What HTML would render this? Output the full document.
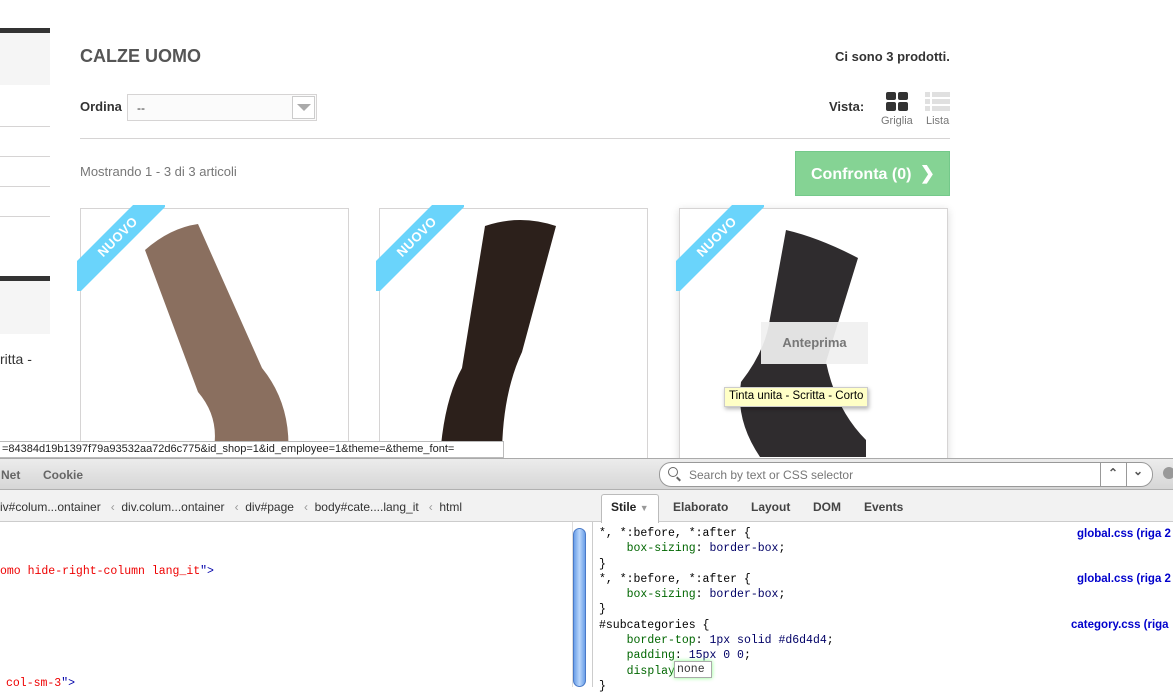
<!DOCTYPE html>
<html><head><meta charset="utf-8"><style>
*{box-sizing:border-box;margin:0;padding:0}
body{width:1173px;height:687px;overflow:hidden;background:#fff;font-family:"Liberation Sans",Arial,sans-serif;position:relative;color:#333}
.a{position:absolute}
.card{position:absolute;top:208px;width:269px;height:260px;border:1px solid #d6d4d4;background:#fff;overflow:visible}
.rib{position:absolute;left:-4px;top:-4px;width:88px;height:86px;overflow:hidden}
.rib div{position:absolute;left:-34px;top:20px;width:150px;height:24px;background:#6ad4fb;transform:rotate(-45deg);color:#fff;font-size:13px;font-weight:bold;text-align:center;line-height:24px;letter-spacing:0.5px}
.mono{font-family:"Liberation Mono",monospace;font-size:11.5px}
.tab{position:absolute;top:500px;font-size:12px;font-weight:bold;color:#444}
</style></head><body>
<div class="a" style="left:0;top:28px;width:50px;height:5px;background:#333"></div>
<div class="a" style="left:0;top:33px;width:50px;height:52px;background:#f5f5f5"></div>
<div class="a" style="left:0;top:126px;width:50px;height:1px;background:#d6d4d4"></div>
<div class="a" style="left:0;top:156px;width:50px;height:1px;background:#d6d4d4"></div>
<div class="a" style="left:0;top:186px;width:50px;height:1px;background:#d6d4d4"></div>
<div class="a" style="left:0;top:216px;width:50px;height:1px;background:#d6d4d4"></div>
<div class="a" style="left:0;top:276px;width:50px;height:5px;background:#333"></div>
<div class="a" style="left:0;top:281px;width:50px;height:53px;background:#f5f5f5"></div>
<div class="a" style="left:0;top:351px;font-size:14px;color:#333">ritta -</div>
<div class="a" style="left:80px;top:46px;font-size:18px;font-weight:bold;color:#555">CALZE UOMO</div>
<div class="a" style="left:835px;top:49px;font-size:13px;font-weight:bold;color:#333">Ci sono 3 prodotti.</div>
<div class="a" style="left:80px;top:99px;font-size:13px;font-weight:bold;color:#333">Ordina</div>
<div class="a" style="left:127px;top:94px;width:190px;height:27px;border:1px solid #d6d4d4;background:#fbfbfb;font-size:12px;padding:6px 9px">--</div>
<div class="a" style="left:292px;top:96px;width:23px;height:23px;border:1px solid #ccc;background:#fff"></div>
<div class="a" style="left:297px;top:104px;width:0;height:0;border-left:7px solid transparent;border-right:7px solid transparent;border-top:7px solid #aaa"></div>
<div class="a" style="left:829px;top:99px;font-size:13px;font-weight:bold;color:#333">Vista:</div>
<div class="a" style="left:886px;top:92px;width:10px;height:8px;background:#333;border-radius:2px"></div>
<div class="a" style="left:898px;top:92px;width:10px;height:8px;background:#333;border-radius:2px"></div>
<div class="a" style="left:886px;top:102px;width:10px;height:9px;background:#333;border-radius:2px"></div>
<div class="a" style="left:898px;top:102px;width:10px;height:9px;background:#333;border-radius:2px"></div>
<div class="a" style="left:881px;top:115px;font-size:11px;color:#777">Griglia</div>
<div class="a" style="left:925px;top:92px;width:5px;height:5px;background:#e0e0e0"></div><div class="a" style="left:932px;top:92px;width:18px;height:5px;background:#e0e0e0"></div>
<div class="a" style="left:925px;top:99px;width:5px;height:5px;background:#e0e0e0"></div><div class="a" style="left:932px;top:99px;width:18px;height:5px;background:#e0e0e0"></div>
<div class="a" style="left:925px;top:106px;width:5px;height:5px;background:#e0e0e0"></div><div class="a" style="left:932px;top:106px;width:18px;height:5px;background:#e0e0e0"></div>
<div class="a" style="left:926px;top:115px;font-size:11px;color:#777">Lista</div>
<div class="a" style="left:80px;top:138px;width:870px;height:1px;background:#d6d4d4"></div>
<div class="a" style="left:80px;top:164px;font-size:13px;color:#777">Mostrando 1 - 3 di 3 articoli</div>
<div class="a" style="left:795px;top:151px;width:155px;height:45px;background:#85d394;border:1px solid #74c98a;color:#fff;font-size:16px;font-weight:bold;line-height:43px;padding-left:15px">Confronta (0) <span style="font-size:18px;margin-left:4px">&#x276F;</span></div>

<div class="card" style="left:80px"><div class="rib"><div>NUOVO</div></div></div>
<div class="card" style="left:379px"><div class="rib"><div>NUOVO</div></div></div>
<div class="card" style="left:679px;box-shadow:0 2px 8px rgba(0,0,0,.15)"><div class="rib"><div>NUOVO</div></div></div>
<svg class="a" style="left:0;top:0" width="1173" height="460">
<path d="M145,250 Q170,228 198,224 L262,368 Q292,405 288,457 L212,457 Q222,420 198,392 Z" fill="#8a6f5f"/>
<path d="M485,226 Q520,214 556,226 L522,352 Q502,395 502,457 L440,457 Q444,400 462,368 Z" fill="#2c201b"/>
<path d="M786,230 Q820,238 858,258 L826,362 Q836,410 866,440 L866,457 L760,457 Q735,420 741,382 Q766,350 770,318 Z" fill="#2f2c2e"/>
</svg>
<div class="a" style="left:761px;top:322px;width:107px;height:42px;background:rgba(240,240,240,.93);color:#777;font-size:13px;font-weight:bold;text-align:center;line-height:42px">Anteprima</div>
<div class="a" style="left:724px;top:387px;height:20px;background:#ffffc6;border:1px solid #ccc;font-size:11.5px;color:#000;padding:2px 4px;box-shadow:1px 2px 4px rgba(0,0,0,.3)">Tinta unita - Scritta - Corto</div>
<div class="a" style="left:0;top:441px;width:504px;height:17px;background:#fff;border:1px solid #bbb;border-left:none;font-size:11px;color:#222;padding:1px 2px">=84384d19b1397f79a93532aa72d6c775&amp;id_shop=1&amp;id_employee=1&amp;theme=&amp;theme_font=</div>
<div class="a" style="left:0;top:458px;width:1173px;height:32px;background:linear-gradient(#ececec,#d6d6d6);border-top:1px solid #aaa;border-bottom:1px solid #b0b0b0"></div>
<div class="a" style="left:1px;top:468px;font-size:12px;font-weight:bold;color:#666">Net</div>
<div class="a" style="left:43px;top:468px;font-size:12px;font-weight:bold;color:#666">Cookie</div>
<div class="a" style="left:659px;top:462px;width:494px;height:25px;background:#fff;border:1px solid #999;border-radius:12px"></div>
<div class="a" style="left:668px;top:467px;width:10px;height:10px;border:1.5px solid #666;border-radius:50%"></div>
<div class="a" style="left:676px;top:478px;width:5px;height:2px;background:#666;transform:rotate(45deg)"></div>
<div class="a" style="left:689px;top:468px;font-size:12px;color:#777">Search by text or CSS selector</div>
<div class="a" style="left:1100px;top:462px;width:1px;height:25px;background:#999"></div>
<div class="a" style="left:1126px;top:462px;width:1px;height:25px;background:#999"></div>
<div class="a" style="left:1108px;top:466px;font-size:12px;font-weight:bold;color:#555">&#x2303;</div>
<div class="a" style="left:1133px;top:464px;font-size:12px;font-weight:bold;color:#555">&#x2304;</div>
<div class="a" style="left:1163px;top:467px;width:12px;height:12px;border-radius:50%;background:#999"></div>
<div class="a" style="left:0;top:490px;width:1173px;height:32px;background:#f2f2f2;border-bottom:1px solid #ccc"></div>
<div class="a" style="left:0;top:500px;font-size:12px;color:#333;white-space:pre">iv#colum...ontainer   <span style="color:#999">‹</span>  div.colum...ontainer   <span style="color:#999">‹</span>  div#page   <span style="color:#999">‹</span>  body#cate....lang_it   <span style="color:#999">‹</span>  html</div>
<div class="a" style="left:601px;top:494px;width:58px;height:29px;background:#fff;border:1px solid #bbb;border-bottom:none;border-radius:3px 3px 0 0"></div>
<div class="tab" style="left:611px;color:#222">Stile <span style="color:#999;font-size:9px">▼</span></div>
<div class="tab" style="left:673px">Elaborato</div>
<div class="tab" style="left:751px">Layout</div>
<div class="tab" style="left:813px">DOM</div>
<div class="tab" style="left:864px">Events</div>
<div class="a" style="left:572px;top:522px;width:21px;height:165px;background:#fff;border-left:1px solid #ddd;border-right:1px solid #ccc"></div>
<div class="a" style="left:573px;top:528px;width:13px;height:159px;background:linear-gradient(90deg,#6b9fe8,#b9d6fb,#6b9fe8);border:1px solid #4a7ac8;border-radius:7px"></div>
<div class="a mono" style="left:0;top:565px;color:#e00">omo hide-right-column lang_it<span style="color:#00a">"&gt;</span></div>
<div class="a mono" style="left:6px;top:677px;color:#e00">col-sm-3<span style="color:#00a">"&gt;</span></div>
<div class="a mono" style="left:599px;top:526px;line-height:15.3px;color:#000;white-space:pre">*, *:before, *:after {
    <span style="color:#060">box-sizing</span>: <span style="color:#006">border-box</span>;
}
*, *:before, *:after {
    <span style="color:#060">box-sizing</span>: <span style="color:#006">border-box</span>;
}
#subcategories {
    <span style="color:#060">border-top</span>: <span style="color:#006">1px solid #d6d4d4</span>;
    <span style="color:#060">padding</span>: <span style="color:#006">15px 0 0</span>;
    <span style="color:#060">display</span>:
}</div>
<div class="a mono" style="left:674px;top:661px;width:38px;height:17px;border:1px solid #aaa;background:#fff;box-shadow:0 0 4px #8f8;padding:1px 2px">none</div>
<div class="a" style="left:1077px;top:528px;font-size:11.5px;font-weight:bold;color:#00c">global.css (riga 2</div>
<div class="a" style="left:1077px;top:573px;font-size:11.5px;font-weight:bold;color:#00c">global.css (riga 2</div>
<div class="a" style="left:1071px;top:619px;font-size:11.5px;font-weight:bold;color:#00c">category.css (riga</div>
</body></html>
